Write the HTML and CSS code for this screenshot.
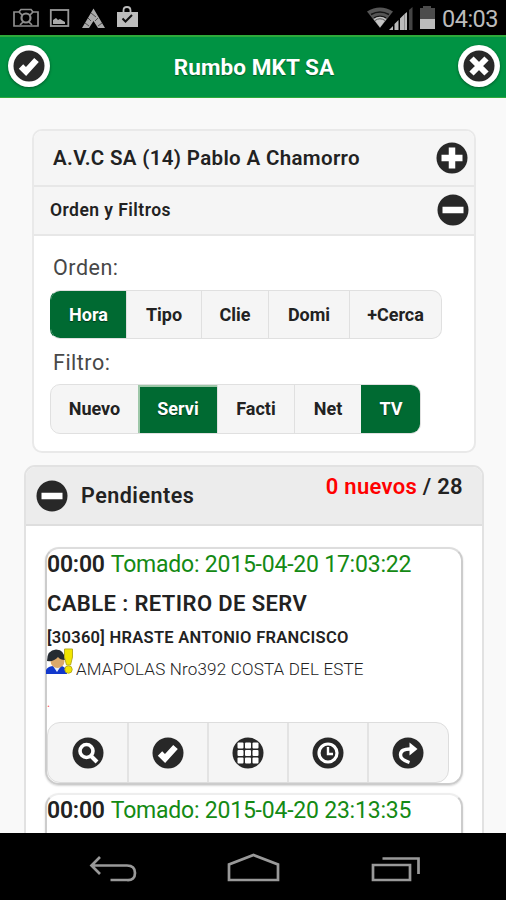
FILE: index.html
```
<!DOCTYPE html>
<html lang="es">
<head>
<meta charset="utf-8">
<title>Rumbo MKT SA</title>
<link rel="stylesheet" href="styles.css">
</head>
<body>
<svg class="defs" width="0" height="0">
  <symbol id="check" viewBox="0 0 32 32"><circle cx="16" cy="16" r="15.5" fill="#282828"/><path d="M8 16.500 13 21.500 23.500 10" fill="none" stroke="#fff" stroke-width="6.200"/></symbol>
  <symbol id="close" viewBox="0 0 32 32"><circle cx="16" cy="16" r="15.5" fill="#282828"/><path d="M8.5 8.5 23.5 23.5M23.5 8.5 8.5 23.5" fill="none" stroke="#fff" stroke-width="6"/></symbol>
  <symbol id="plus" viewBox="0 0 32 32"><circle cx="16" cy="16" r="15.5" fill="#282828"/><path d="M16 5.500V26.500M5.500 16H26.500" fill="none" stroke="#fff" stroke-width="6.500"/></symbol>
  <symbol id="minus" viewBox="0 0 32 32"><circle cx="16" cy="16" r="15.5" fill="#282828"/><path d="M5.500 16H26.500" fill="none" stroke="#fff" stroke-width="6.500"/></symbol>
  <symbol id="search" viewBox="0 0 32 32"><circle cx="16" cy="16" r="15.5" fill="#282828"/><circle cx="14.500" cy="14" r="6.500" fill="none" stroke="#fff" stroke-width="3.600"/><path d="M18.500 18.500 25 25" stroke="#fff" stroke-width="4"/></symbol>
  <symbol id="grid" viewBox="0 0 32 32"><circle cx="16" cy="16" r="15.5" fill="#282828"/><g fill="#fff"><rect x="5.500" y="5.500" width="6" height="6" rx="1"/><rect x="13" y="5.500" width="6" height="6" rx="1"/><rect x="20.500" y="5.500" width="6" height="6" rx="1"/><rect x="5.500" y="13" width="6" height="6" rx="1"/><rect x="13" y="13" width="6" height="6" rx="1"/><rect x="20.500" y="13" width="6" height="6" rx="1"/><rect x="5.500" y="20.500" width="6" height="6" rx="1"/><rect x="13" y="20.500" width="6" height="6" rx="1"/><rect x="20.500" y="20.500" width="6" height="6" rx="1"/></g></symbol>
  <symbol id="clock" viewBox="0 0 32 32"><circle cx="16" cy="16" r="15.5" fill="#282828"/><circle cx="16" cy="16" r="9" fill="none" stroke="#fff" stroke-width="3.200"/><path d="M16 10V17H21" fill="none" stroke="#fff" stroke-width="2.400"/></symbol>
  <symbol id="forward" viewBox="0 0 32 32"><circle cx="16" cy="16" r="15.5" fill="#282828"/><path d="M17.500 25.500C11 23.500 8.500 21.500 8.500 18 8.500 13.500 12 12 18 12" fill="none" stroke="#fff" stroke-width="3.400"/><path d="M17.500 5.500 25.500 12 17.500 18.500Z" fill="#fff"/></symbol>
</svg>

<div class="phone">
  <div class="status">
    <svg class="status-left" width="140" height="35" viewBox="0 0 140 35">
      <g fill="none" stroke="#8d8d8d" stroke-width="1.700"><path d="M14 12H19L21 9.500H31L33 12H38V26H14Z"/><circle cx="26" cy="18" r="4.500" stroke-width="2.200"/><path d="M19 12 22 15M33 12 30 15M20 25 23 22M32 25 29 22"/></g>
      <rect x="50.800" y="10" width="17.500" height="16" fill="none" stroke="#999" stroke-width="1.800"/><path d="M53 24V20L56 18 58 20 60 19 65 22V24Z" fill="#aaa"/>
      <path d="M93.500 8.500 105 28H98L93.500 21 89 28H82Z" fill="#aaa"/><path d="M88 18 91 21M85 23 89 26M98 18 95 21M102 23 98 26M91 13 96 17" stroke="#333" stroke-width=".8"/>
      <rect x="117" y="12" width="21" height="15" fill="#bdbdbd"/><path d="M123.500 12V10.500Q123.500 7 127 7T130.500 10.500V12" fill="none" stroke="#bdbdbd" stroke-width="1.800"/><path d="M122.500 18.500 125.500 21.500 132 15" fill="none" stroke="#111" stroke-width="2"/>
    </svg>
    <div class="status-right">
      <svg width="70" height="35" viewBox="0 0 70 35">
        <path d="M0 11.500Q13 3.500 26 11.500L13 28Z" fill="#555"/><path d="M4 14.500Q13 9.500 22 14.500M7 18Q13 14.500 19 18" fill="none" stroke="#151515" stroke-width="1.500"/><path d="M6.500 19Q13 14.500 19.500 19L13 27.500Z" fill="#c4c4c4"/><path d="M8 20.500Q13 17 18 20.500" fill="none" stroke="#555"/>
        <path d="M22 30H26V26ZM27.500 30H31.500V20L27.500 24ZM33 30H37.500V14L33 18.500Z" fill="#bbb"/><path d="M42 30H45.500V7L42 10Z" fill="#444"/><path d="M37.500 30H40V12L37.500 14Z" fill="#bbb"/>
        <path d="M53 8H56V6H64V8H68V29H53Z" fill="#4c4c4c"/><rect x="53" y="19" width="15" height="10" fill="#bbb"/>
      </svg>
      <span class="time">04:03</span>
    </div>
  </div>

  <header class="header">
    <span class="round"><svg class="ic"><use href="#check"/></svg></span>
    <h1>Rumbo MKT SA</h1>
    <span class="round"><svg class="ic"><use href="#close"/></svg></span>
  </header>

  <main>
    <section class="panel">
      <div class="row row-user"><span class="t-user">A.V.C SA (14) Pablo A Chamorro</span><svg class="ic"><use href="#plus"/></svg></div>
      <div class="row row-filters"><span class="t-filters">Orden y Filtros</span><svg class="ic"><use href="#minus"/></svg></div>
      <div class="filters">
        <div class="label">Orden:</div>
        <div class="group orden"><span class="on">Hora</span><span>Tipo</span><span>Clie</span><span>Domi</span><span>+Cerca</span></div>
        <div class="label label-filtro">Filtro:</div>
        <div class="group filtro"><span>Nuevo</span><span class="on focus">Servi</span><span>Facti</span><span>Net</span><span class="on">TV</span></div>
      </div>
    </section>

    <section class="pending">
      <div class="pending-head"><svg class="ic"><use href="#minus"/></svg><h2>Pendientes</h2><div class="count"><span class="new">0 nuevos</span> / 28</div></div>
      <div class="list">
        <article class="item">
          <div class="taken"><b>00:00</b> <span>Tomado: 2015-04-20 17:03:22</span></div>
          <div class="service">CABLE : RETIRO DE SERV</div>
          <div class="client">[30360] HRASTE ANTONIO FRANCISCO</div>
          <div class="address">
            <svg width="29" height="27" viewBox="0 0 29 27"><path d="M0 26V22Q2 18 8 18H16Q21 20 21 26Z" fill="#1238cc"/><path d="M7 18 11 24 15 18Z" fill="#e8f0fa"/><ellipse cx="11.500" cy="13" rx="7" ry="7" fill="#dba96b"/><path d="M1 13Q1 2 10 1.500 19 2 19 12 14 12 12 9 8 14 1 13Z" fill="#252b32"/><path d="M18.500 1H26.500V9L24.500 17H20.500L18.500 9Z" fill="#f2e600" stroke="#b8ad20"/><circle cx="22.500" cy="21.500" r="3.700" fill="#f2e600" stroke="#b8ad20"/></svg><span>AMAPOLAS Nro392 COSTA DEL ESTE</span>
          </div>
          <div class="note">.</div>
          <div class="actions">
            <span><svg class="ic"><use href="#search"/></svg></span><span><svg class="ic"><use href="#check"/></svg></span><span><svg class="ic"><use href="#grid"/></svg></span><span><svg class="ic"><use href="#clock"/></svg></span><span><svg class="ic"><use href="#forward"/></svg></span>
          </div>
        </article>
        <article class="item next">
          <div class="taken"><b>00:00</b> <span>Tomado: 2015-04-20 23:13:35</span></div>
        </article>
      </div>
    </section>
  </main>

  <nav class="nav">
    <svg width="506" height="67" viewBox="0 0 506 67" fill="none" stroke="#999" stroke-width="2.700">
      <path d="M100 24 91.500 32.500 100 41M92 32.500H127Q135 32.500 135 40T127 47H110.500"/>
      <path d="M229 47V31.500L253.500 22 278 31.500V47Z"/>
      <path d="M373 32H410V47H373ZM382.500 25.500H418.500V41"/>
    </svg>
  </nav>
</div>
</body>
</html>
```
FILE: styles.css
```
* { box-sizing: border-box; }
body { margin: 0; background: #f9f9f9; font-family: Roboto, "Liberation Sans", sans-serif; color: #222; }
h1, h2 { margin: 0; font-weight: 700; }
.defs { display: block; height: 0; }
.ic { width: 32px; height: 32px; flex: none; display: block; }
.phone { width: 506px; height: 900px; display: flex; flex-direction: column; overflow: hidden; white-space: nowrap; }

.status { height: 35px; flex: none; background: #000; display: flex; justify-content: space-between; }
.status-right { display: flex; padding-right: 7px; gap: 5px; }
.status-right svg { flex: none; }
.time { width: 57px; font-size: 23.500px; line-height: 38px; color: #bbb; letter-spacing: -.5px; }

.header { height: 63px; flex: none; padding: 0 6px 0 8px; background: #009343; border-top: 2px solid #2fa93b; border-bottom: 1px solid #2fa93b; display: flex; align-items: center; justify-content: space-between; }
.header h1 { font-size: 22.500px; letter-spacing: .1px; color: #fff; text-shadow: 0 1px 1px #005c25; }
.round { width: 42px; height: 42px; margin-top: -3px; padding: 5px; border-radius: 50%; background: #fff; box-shadow: 0 1px 3px rgba(0, 0, 0, .4); }

main { flex: 1; min-height: 0; overflow: hidden; padding: 31px 22px 0 24px; display: flex; flex-direction: column; gap: 12px; }
.panel { height: 324px; flex: none; margin: 0 8px; border: 2px solid #e9e9e9; border-radius: 10px; background: #fff; overflow: hidden; }
.row { background: #f5f5f5; border-bottom: 2px solid #e7e7e7; display: flex; align-items: center; justify-content: space-between; }
.row-user { height: 56px; padding: 0 6px 0 19px; }
.row-filters { height: 49px; padding: 0 5px 1px 16px; }
.t-user { font-size: 20.500px; font-weight: 600; letter-spacing: .34px; }
.t-filters { font-size: 17.500px; font-weight: 600; letter-spacing: .45px; }
.filters { padding: 18px 0 0 16px; }
.label { height: 26px; line-height: 27px; padding-left: 3px; font-size: 21.500px; font-weight: 400; letter-spacing: .5px; color: #484848; }
.label-filtro { margin-top: 10px; }
.group { display: grid; width: max-content; font-size: 18px; font-weight: 700; border: 1px solid #e0e0e0; border-radius: 10px; background: #f5f5f5; overflow: hidden; }
.orden { height: 49px; margin-top: 10px; grid-template-columns: 75px 75px 67px 81px 92px; }
.filtro { height: 50px; margin-top: 9px; grid-template-columns: 87px 79px 77px 67px 59px; }
.group span { display: flex; align-items: center; justify-content: center; border-left: 1px solid #e0e0e0; padding-bottom: 1px; }
.group span:first-child { border-left: 0; }
.group .on { background: #006a32; color: #fff; text-shadow: 0 1px 1px #003517; }
.orden, .filtro .on:last-child { border-left-color: #006a32; }
.group .focus { border-left: 2px solid #9dc7a8; border-top: 2px solid #9dc7a8; padding: 0 1px 3px 0; }

.pending { width: 460px; height: 420px; flex: none; border: 2px solid #e2e2e2; border-radius: 11px 11px 0 0; background: #fff; overflow: hidden; }
.pending-head { height: 59px; padding: 0 19px 0 10px; background: #ececec; border-bottom: 2px solid #dedede; display: flex; align-items: center; }
.pending-head h2 { margin-left: 13px; font-size: 21.500px; font-weight: 600; letter-spacing: .5px; }
.count { margin: -19px 0 0 auto; font-size: 22px; font-weight: 600; letter-spacing: .3px; }
.new { color: #f00; }
.list { padding: 21px 19px 0; display: flex; flex-direction: column; gap: 8px; }
.item { height: 238px; border: 2px solid #ccc; border-top-color: #ddd; border-radius: 14px; box-shadow: 0 1px 2px rgba(0, 0, 0, .16); }
.next { height: 120px; border-top-color: #eee; }
.taken { height: 30px; line-height: 32px; font-size: 23px; letter-spacing: -.22px; }
.taken b { font-weight: 600; margin-right: 1px; }
.taken span { color: #148a14; }
.service { margin-top: 10px; height: 30px; line-height: 30px; font-size: 22px; font-weight: 600; letter-spacing: .4px; }
.client { margin-top: 8px; height: 22px; line-height: 22px; font-size: 16.500px; font-weight: 600; letter-spacing: .28px; }
.address { height: 29px; display: flex; align-items: flex-start; font-size: 17px; font-weight: 300; letter-spacing: .19px; color: #222; }
.address svg { flex: none; margin: -1px 0 0 -1px; }
.address span { line-height: 44px; margin: -2px 0 0 1px; }
.note { height: 44px; line-height: 50px; font-size: 12px; color: #f55; }
.actions { width: 402px; height: 61px; display: grid; grid-template-columns: 79px repeat(4, 80px); border: 1px solid #ddd; border-radius: 13px; background: #f5f5f5; overflow: hidden; }
.actions span { display: flex; align-items: center; justify-content: center; border-left: 2px solid #e3e3e3; }
.actions span:first-child { border-left: 0; }

.nav { height: 67px; flex: none; background: #000; }
.nav svg { display: block; }
```
